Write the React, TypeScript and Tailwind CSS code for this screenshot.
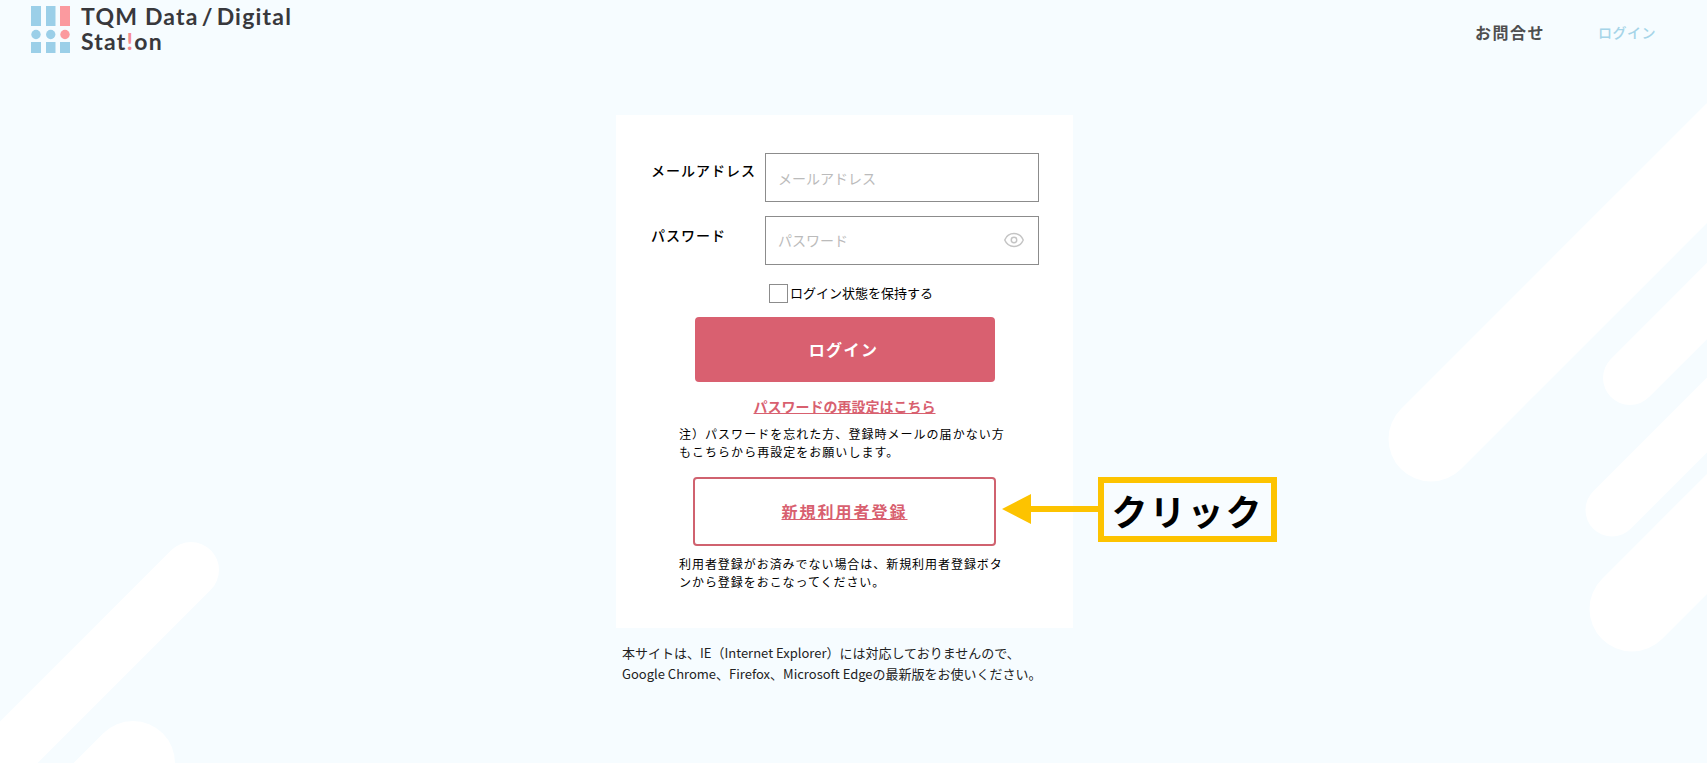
import { Eye } from 'lucide-react'

function Background() {
  return (
    <svg className="absolute inset-0" width="1707" height="763" fill="none" stroke="#ffffff" strokeLinecap="round">
      <path d="M1431 439 L1831 39" strokeWidth="85" />
      <path d="M1630 378 L1830 178" strokeWidth="54" />
      <path d="M1612 510 L1812 310" strokeWidth="53" />
      <path d="M1632 609 L1832 409" strokeWidth="85" />
      <path d="M191 570 L-109 870" strokeWidth="56" />
      <path d="M133 763 L33 863" strokeWidth="84" />
    </svg>
  )
}

function Logo() {
  return (
    <div className="flex items-start">
      <svg width="40" height="48" viewBox="0 0 40 48" className="mt-[6px] shrink-0">
        <rect x="0" y="0" width="10" height="20" fill="#9bcfe8" />
        <rect x="15" y="0" width="9.5" height="20" fill="#9bcfe8" />
        <rect x="29" y="0" width="10" height="20" fill="#fb9a9f" />
        <circle cx="5" cy="28.5" r="4.7" fill="#9bcfe8" />
        <circle cx="19.7" cy="28.5" r="4.7" fill="#9bcfe8" />
        <circle cx="34" cy="28.5" r="4.7" fill="#fb9a9f" />
        <rect x="0" y="36" width="10" height="11" fill="#9bcfe8" />
        <rect x="15" y="36" width="9.5" height="11" fill="#9bcfe8" />
        <rect x="29" y="36" width="10" height="11" fill="#9bcfe8" />
      </svg>
      <div className="ml-[10px] mt-[4px] font-['Lato',sans-serif] text-[23px] font-bold leading-[25px] tracking-[1.2px] text-[#38383c]">
        <div>
          TQM Data<span className="mx-[3px]">/</span>Digital
        </div>
        <div>
          Stat<span className="text-[#f58a90]">!</span>on
        </div>
      </div>
    </div>
  )
}

export default function App() {
  return (
    <div className="relative h-[763px] w-[1707px] overflow-hidden bg-[#f6fcff] font-['Noto_Sans_CJK_JP',sans-serif] text-black">
      <Background />
      <div className="relative">
        <header className="flex h-[115px] items-start justify-between pl-[31px] pr-[51px]">
          <Logo />
          <nav className="mt-[20px] flex items-center gap-[53px]">
            <a className="text-[16px] font-bold leading-[24px] tracking-[1.5px] text-[#4f4f4f]">お問合せ</a>
            <a className="text-[14px] font-medium leading-[24px] tracking-[0.5px] text-[#a5d4e8]">ログイン</a>
          </nav>
        </header>

        <main className="ml-[616px] w-[457px]">
          <div className="bg-white pb-[37px] pt-[38px]">
            <div className="flex items-start pl-[35px]">
              <label className="w-[114px] pt-[7px] text-[14px] font-medium leading-[20px] tracking-[1px]">メールアドレス</label>
              <input
                placeholder="メールアドレス"
                className="h-[49px] w-[274px] border border-[#8c8c8c] bg-white px-[12px] text-[14px] outline-none placeholder:text-[#bbbbbb]"
              />
            </div>
            <div className="mt-[14px] flex items-start pl-[35px]">
              <label className="w-[114px] pt-[9px] text-[14px] font-medium leading-[20px] tracking-[1px]">パスワード</label>
              <div className="relative">
                <input
                  placeholder="パスワード"
                  className="h-[49px] w-[274px] border border-[#8c8c8c] bg-white px-[12px] pb-[2px] text-[14px] outline-none placeholder:text-[#bbbbbb]"
                />
                <Eye className="absolute right-[14px] top-[13px] h-[22px] w-[22px] text-[#c4c4c4]" strokeWidth={1.6} />
              </div>
            </div>

            <div className="ml-[153px] mt-[19px] flex h-[19px] items-center">
              <span className="h-[19px] w-[19px] border border-[#8c8c8c] bg-white" />
              <span className="ml-[2px] pb-[2px] text-[13px] leading-[17px]">ログイン状態を保持する</span>
            </div>

            <button className="ml-[79px] mt-[14px] block h-[65px] w-[300px] rounded-[4px] bg-[#d96070] pb-[2px] pr-[3px] text-[16px] font-bold tracking-[1.4px] text-white">
              ログイン
            </button>

            <div className="mt-[14px] pb-[1px] text-center text-[14px] font-bold leading-[20px]">
              <a className="text-[#d8606f] underline">パスワードの再設定はこちら</a>
            </div>

            <p className="ml-[63px] mt-[8px] text-[12px] leading-[18px] tracking-[1.03px]">
              注）パスワードを忘れた方、登録時メールの届かない方
              <br />
              もこちらから再設定をお願いします。
            </p>

            <div className="relative ml-[77px] mt-[16px] w-[303px]">
              <button className="flex h-[69px] w-[303px] items-center justify-center rounded-[4px] border-2 border-[#d0626f] bg-white pb-[2px] text-[16px] font-bold tracking-[2px] text-[#d8606f] underline">
                新規利用者登録
              </button>
              <div className="absolute left-[309px] top-0 flex items-start">
                <svg width="96" height="65" viewBox="0 0 96 65" className="shrink-0">
                  <path d="M0 32 L29 17 L29 29 L96 29 L96 35 L29 35 L29 47 Z" fill="#fdc300" />
                </svg>
                <div className="flex h-[65px] w-[179px] items-center justify-center border-[6px] border-[#fdc300] bg-[#f8fcff] text-[36px] font-bold leading-none tracking-[2px] text-black">
                  クリック
                </div>
              </div>
            </div>

            <p className="ml-[63px] mt-[9px] text-[12px] leading-[18px] tracking-[0.95px]">
              利用者登録がお済みでない場合は、新規利用者登録ボタ
              <br />
              ンから登録をおこなってください。
            </p>
          </div>

          <p className="ml-[6px] mt-[14px] text-[13px] leading-[21px] text-[#222222]">
            本サイトは、IE（Internet Explorer）には対応しておりませんので、
            <br />
            Google Chrome、Firefox、Microsoft Edgeの最新版をお使いください。
          </p>
        </main>
      </div>
    </div>
  )
}
